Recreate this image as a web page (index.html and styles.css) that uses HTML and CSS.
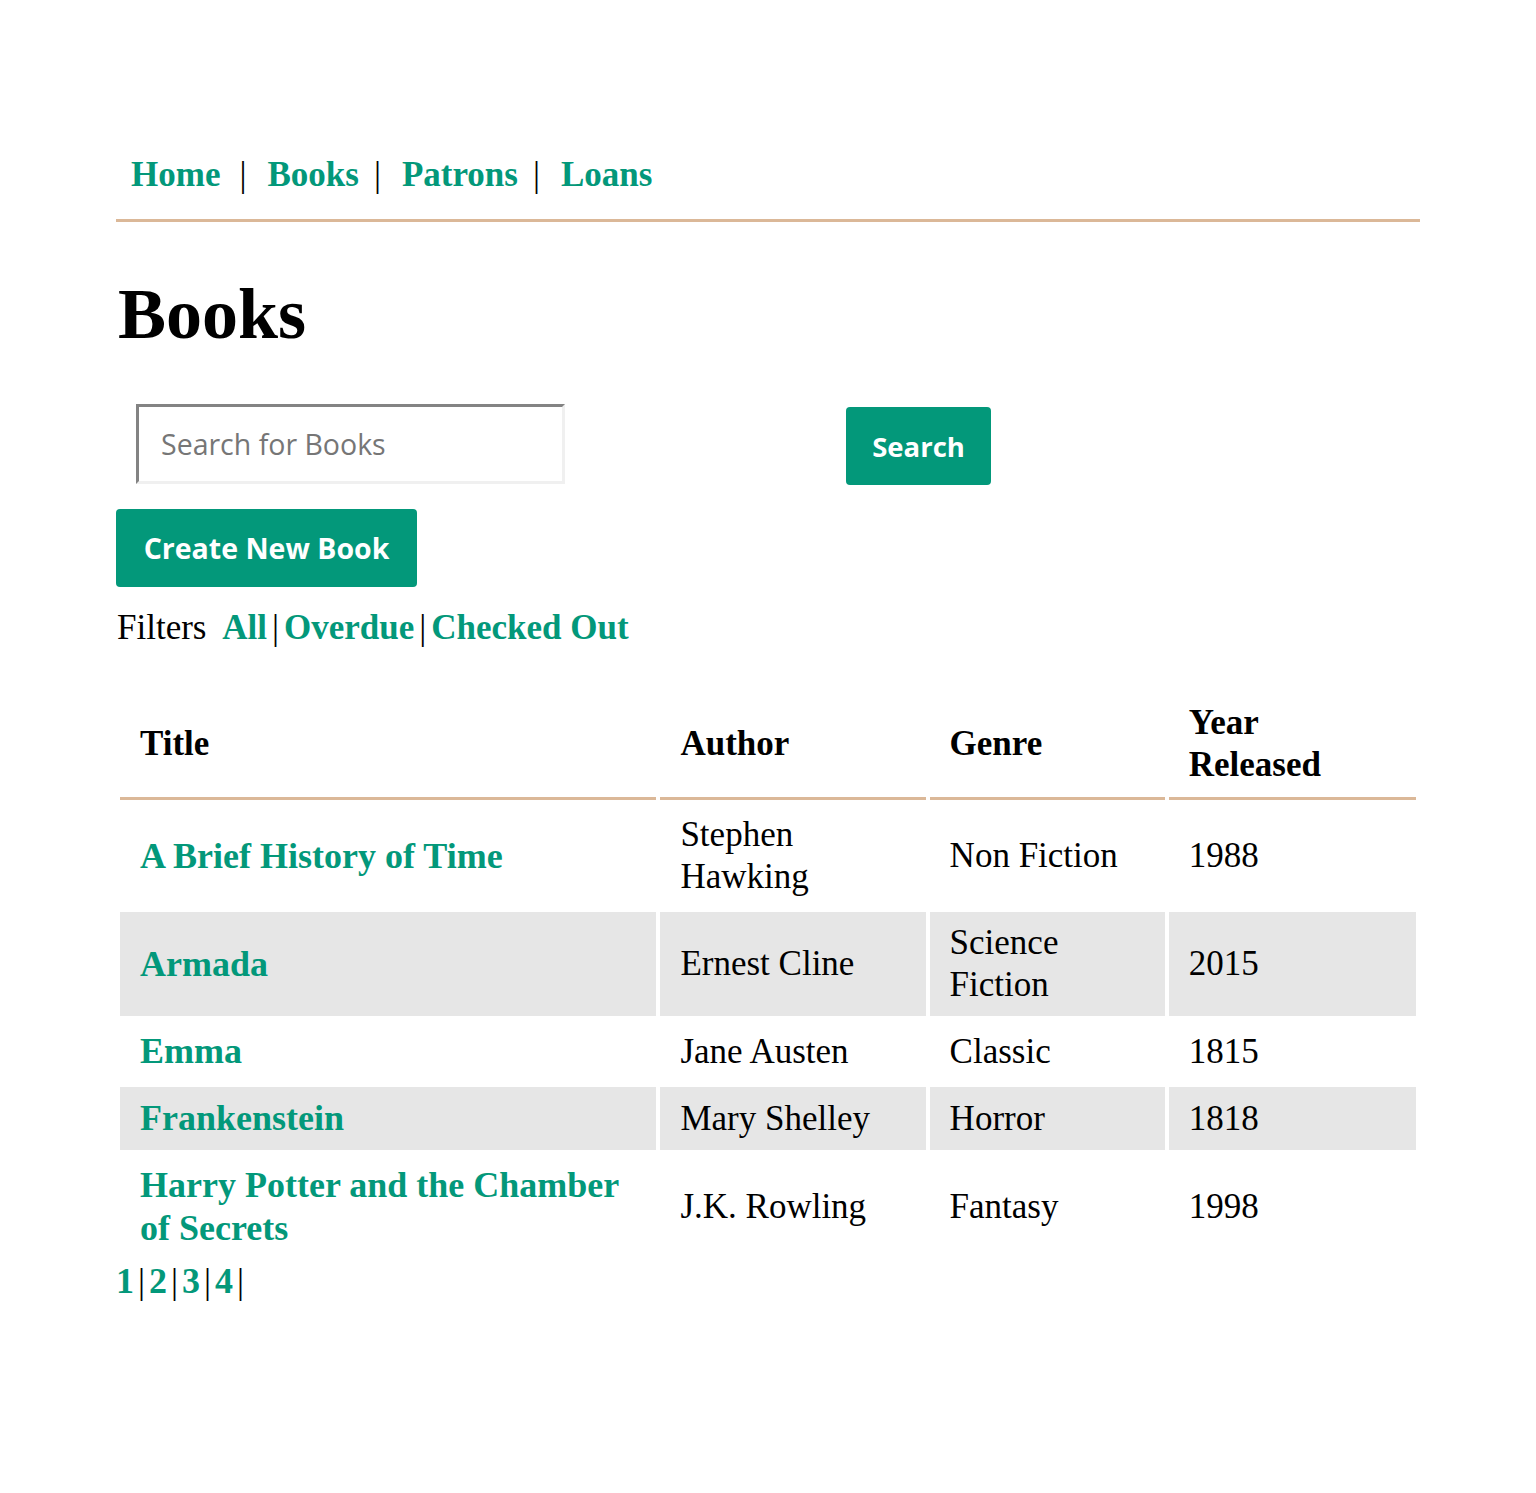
FILE: index.html
```html
<!DOCTYPE html>
<html lang="en">
<head>
<meta charset="utf-8">
<title>Books</title>
<link rel="stylesheet" href="styles.css">
</head>
<body>
<div class="page">
  <nav class="nav">
    <a href="#">Home</a><span class="sep">|</span><a href="#">Books</a><span class="sep">|</span><a href="#">Patrons</a><span class="sep">|</span><a href="#">Loans</a>
  </nav>

  <h1 class="title">Books</h1>

  <form class="search">
    <input class="search-input" type="text" placeholder="Search for Books">
    <button class="btn search-btn" type="button">Search</button>
  </form>

  <div class="create-row">
    <a class="btn" href="#">Create New Book</a>
  </div>

  <p class="filters">Filters <a class="first" href="#">All</a><span class="sep">|</span><a href="#">Overdue</a><span class="sep">|</span><a href="#">Checked Out</a></p>

  <table class="books">
    <thead>
      <tr>
        <th class="c-title">Title</th>
        <th class="c-author">Author</th>
        <th class="c-genre">Genre</th>
        <th class="c-year">Year Released</th>
      </tr>
    </thead>
    <tbody>
      <tr>
        <td><a href="#">A Brief History of Time</a></td>
        <td>Stephen Hawking</td>
        <td>Non Fiction</td>
        <td>1988</td>
      </tr>
      <tr>
        <td><a href="#">Armada</a></td>
        <td>Ernest Cline</td>
        <td>Science Fiction</td>
        <td>2015</td>
      </tr>
      <tr>
        <td><a href="#">Emma</a></td>
        <td>Jane Austen</td>
        <td>Classic</td>
        <td>1815</td>
      </tr>
      <tr>
        <td><a href="#">Frankenstein</a></td>
        <td>Mary Shelley</td>
        <td>Horror</td>
        <td>1818</td>
      </tr>
      <tr>
        <td><a href="#">Harry Potter and the Chamber of Secrets</a></td>
        <td>J.K. Rowling</td>
        <td>Fantasy</td>
        <td>1998</td>
      </tr>
    </tbody>
  </table>

  <p class="pages"><a href="#">1</a>|<a href="#">2</a>|<a href="#">3</a>|<a href="#">4</a>|</p>
</div>
</body>
</html>
```

FILE: styles.css
```css
html, body {
  margin: 0;
  padding: 0;
  background: #ffffff;
}

body {
  font-family: "Liberation Serif", "Times New Roman", serif;
  font-size: 35px;
  line-height: 42px;
  color: #000000;
}

a {
  color: #03987a;
  text-decoration: none;
  font-weight: bold;
}

.page {
  width: 1304px;
  margin: 0 auto;
  padding-top: 130px;
  padding-bottom: 180px;
}

/* nav */
.nav {
  padding: 24px 0 23px 0;
  border-bottom: 3px solid #dbb898;
  font-size: 35px;
  line-height: 42px;
}

.nav a {
  padding: 0 15px;
}

.nav a:first-child {
  padding-right: 19px;
}

.nav .sep {
  margin-right: 6px;
}

/* heading */
.title {
  margin: 52px 0 0 2px;
  font-size: 72px;
  line-height: 80px;
  font-weight: bold;
}

/* search */
.search {
  display: flex;
  align-items: flex-start;
  margin: 50px 0 0 0;
}

.search-input {
  box-sizing: border-box;
  width: 429px;
  height: 80px;
  margin-left: 20px;
  padding: 0 0 0 22px;
  border-top: 3px solid #838383;
  border-left: 3px solid #838383;
  border-right: 3px solid #f0f0f0;
  border-bottom: 3px solid #f0f0f0;
  font-family: "Open Sans", "DejaVu Sans", sans-serif;
  font-size: 28.5px;
  color: #333333;
  background: #ffffff;
  outline: none;
}

.search-input::placeholder {
  color: #767676;
}

.btn {
  display: inline-flex;
  align-items: center;
  justify-content: center;
  box-sizing: border-box;
  height: 78px;
  padding: 0 20px;
  border: none;
  border-radius: 4px;
  background: #03987a;
  color: #ffffff;
  font-family: "Open Sans", "DejaVu Sans", sans-serif;
  font-size: 27.5px;
  font-weight: 700;
  cursor: pointer;
}

.search-btn {
  width: 145px;
  margin: 3px 0 0 281px;
}

.create-row {
  margin-top: 24px;
}

.create-row .btn {
  width: 301px;
  font-size: 28.5px;
}

/* filters */
.filters {
  margin: 20px 0 0 0;
  padding-left: 1px;
}

.filters a.first {
  margin-left: 7px;
}

.filters .sep {
  margin: 0 5px;
}

/* table */
.books {
  margin-top: 38px;
  width: 1304px;
  border-collapse: separate;
  border-spacing: 4px;
}

.books th {
  text-align: left;
  font-weight: bold;
  padding: 11px 20px 11px 20px;
  border-bottom: 3px solid #dbb898;
  vertical-align: middle;
}

.books td {
  padding: 10px 20px;
  vertical-align: middle;
}

.books td a {
  font-size: 36px;
}

.books tbody tr:nth-child(even) td {
  background: #e6e6e6;
}

.c-title { width: 496px; }
.c-author { width: 225px; }
.c-genre { width: 195px; }
.books th.c-year { width: 187px; padding-right: 40px; }

/* pagination */
.pages {
  margin: -4px 0 0 0;
}

.pages a {
  padding: 0 4px;
  font-size: 36px;
}

.pages a:first-child {
  padding-left: 0;
}
```
